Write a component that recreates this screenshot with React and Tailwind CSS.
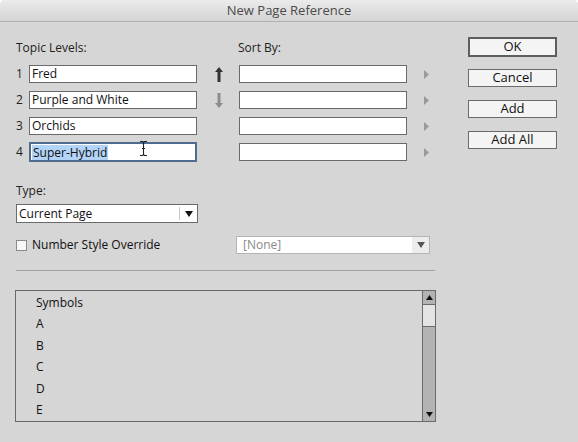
import React from 'react'

const font = { fontFamily: '"Open Sans", "Liberation Sans", sans-serif' }

function UpArrow({ color }) {
  return (
    <svg width="8" height="15" viewBox="0 0 8 15">
      <path d="M4 0 L8 5 L5.5 5 L5.5 15 L2.5 15 L2.5 5 L0 5 Z" fill={color} />
    </svg>
  )
}

function DownArrow({ color }) {
  return (
    <svg width="8" height="15" viewBox="0 0 8 15">
      <path d="M4 15 L8 10 L5.5 10 L5.5 0 L2.5 0 L2.5 10 L0 10 Z" fill={color} />
    </svg>
  )
}

function Triangle() {
  return (
    <svg width="5" height="9" viewBox="0 0 5 9">
      <path d="M0 0 L5 4.5 L0 9 Z" fill="#9a9a9a" />
    </svg>
  )
}

function Caret({ color = '#111' }) {
  return (
    <svg width="8" height="6" viewBox="0 0 8 6">
      <path d="M0 0 L8 0 L4 6 Z" fill={color} />
    </svg>
  )
}

// text cursor hovering over the focused field
function IBeam() {
  return (
    <svg width="9" height="17" viewBox="0 0 9 17" className="absolute left-[108px] top-[-4px]">
      <path
        d="M1 1.5 H3.5 L4.5 2.5 L5.5 1.5 H8 M4.5 2.5 V14.5 M1 15.5 H3.5 L4.5 14.5 L5.5 15.5 H8 M3 8.5 H6"
        stroke="#222"
        strokeWidth="1.1"
        fill="none"
      />
    </svg>
  )
}

const topics = ['Fred', 'Purple and White', 'Orchids', 'Super-Hybrid']
const letters = ['Symbols', 'A', 'B', 'C', 'D', 'E']

function TopicRow({ n, value, focused, arrow }) {
  return (
    <div className="flex items-center h-[26px]">
      <span className="w-[13px] text-[12px] text-[#222]">{n}</span>
      {focused ? (
        <div className="w-[168px] h-[20px] bg-white border-2 border-[#4f6c8c] flex items-center pl-[1px] relative">
          <span className="bg-[#b3d4f7] text-[12px] text-[#111] leading-[15px] px-[1px]">{value}</span>
          <IBeam />
        </div>
      ) : (
        <div className="w-[168px] h-[18px] bg-white border border-[#6a6a6a] flex items-center pl-[2px] text-[12px] text-[#111]">
          {value}
        </div>
      )}
      <div className="w-[42px] flex justify-center pl-[1px]">{arrow}</div>
      <div className="w-[168px] h-[18px] bg-white border border-[#6a6a6a]" />
      <div className="ml-[17px]">
        <Triangle />
      </div>
    </div>
  )
}

function Button({ children, primary }) {
  return (
    <div
      className={
        primary
          ? 'w-[89px] h-[20px] bg-[#f4f4f4] border-2 border-[#5e5e5e] flex items-center justify-center text-[13px] text-[#111]'
          : 'w-[89px] h-[18px] bg-[#f4f4f4] border border-[#6a6a6a] flex items-center justify-center text-[13px] text-[#111]'
      }
    >
      {children}
    </div>
  )
}

export default function App() {
  return (
    <div className="w-[578px] h-[442px] bg-[#d6d6d6] overflow-hidden rounded-t-[5px]" style={font}>
      <div className="h-[22px] bg-gradient-to-b from-[#ebebeb] to-[#d4d4d4] border-b border-[#b1b1b1] flex items-center justify-center text-[13px] text-[#4a4a4a]">
        New Page Reference
      </div>

      <div className="pl-[16px] pt-[17px] flex">
        <div>
          <div className="flex text-[12px] text-[#222] h-[22px]">
            <span className="w-[222px]">Topic Levels:</span>
            <span>Sort By:</span>
          </div>
          <div className="flex flex-col">
            <TopicRow n="1" value={topics[0]} arrow={<UpArrow color="#333" />} />
            <TopicRow n="2" value={topics[1]} arrow={<DownArrow color="#8c8c8c" />} />
            <TopicRow n="3" value={topics[2]} />
            <TopicRow n="4" value={topics[3]} focused />
          </div>
        </div>

        <div className="ml-[39px] mt-[-2px] flex flex-col gap-[12px]">
          <Button primary>OK</Button>
          <div className="flex flex-col gap-[13px]">
            <Button>Cancel</Button>
            <Button>Add</Button>
            <Button>Add All</Button>
          </div>
        </div>
      </div>

      <div className="pl-[16px] mt-[17px] text-[12px] text-[#222]">Type:</div>
      <div className="ml-[16px] mt-[4px] w-[182px] h-[19px] bg-white border border-[#6a6a6a] flex items-center text-[12px] text-[#111]">
        <span className="flex-1 pl-[2px]">Current Page</span>
        <span className="w-px h-[13px] bg-[#c8c8c8]" />
        <span className="w-[17px] flex justify-center">
          <Caret />
        </span>
      </div>

      <div className="flex items-center mt-[13px] pl-[16px]">
        <div className="w-[11px] h-[11px] bg-[#f7f7f7] border border-[#8a8a8a]" />
        <span className="ml-[5px] w-[204px] text-[12px] text-[#111]">Number Style Override</span>
        <div className="w-[194px] h-[18px] bg-white border border-[#b4b4b4] flex items-center text-[12px] text-[#8a8a8a]">
          <span className="flex-1 pl-[6px]">[None]</span>
          <span className="w-[17px] h-full bg-[#ededed] flex items-center justify-center">
            <Caret color="#555" />
          </span>
        </div>
      </div>

      <div className="ml-[16px] mt-[16px] w-[419px] h-px bg-[#a3a3a3]" />

      <div className="ml-[15px] mt-[19px] w-[421px] h-[132px] border border-[#6a6a6a] flex">
        <div className="flex-1 pl-[20px] pt-[1px] flex flex-col">
          {letters.map((l) => (
            <div key={l} className="h-[21.8px] flex items-center text-[12px] text-[#111]">
              {l}
            </div>
          ))}
        </div>
        <div className="w-[13px] border-l border-[#6a6a6a] flex flex-col bg-[#b3b3b3]">
          <div className="h-[14px] flex items-center justify-center border-b border-[#6a6a6a]">
            <svg width="7" height="5" viewBox="0 0 7 5">
              <path d="M0 5 L7 5 L3.5 0 Z" fill="#111" />
            </svg>
          </div>
          <div className="h-[22px] bg-[#e4e4e4] border-b border-[#6a6a6a]" />
          <div className="flex-1" />
          <div className="h-[14px] flex items-center justify-center">
            <svg width="7" height="5" viewBox="0 0 7 5">
              <path d="M0 0 L7 0 L3.5 5 Z" fill="#111" />
            </svg>
          </div>
        </div>
      </div>
    </div>
  )
}
